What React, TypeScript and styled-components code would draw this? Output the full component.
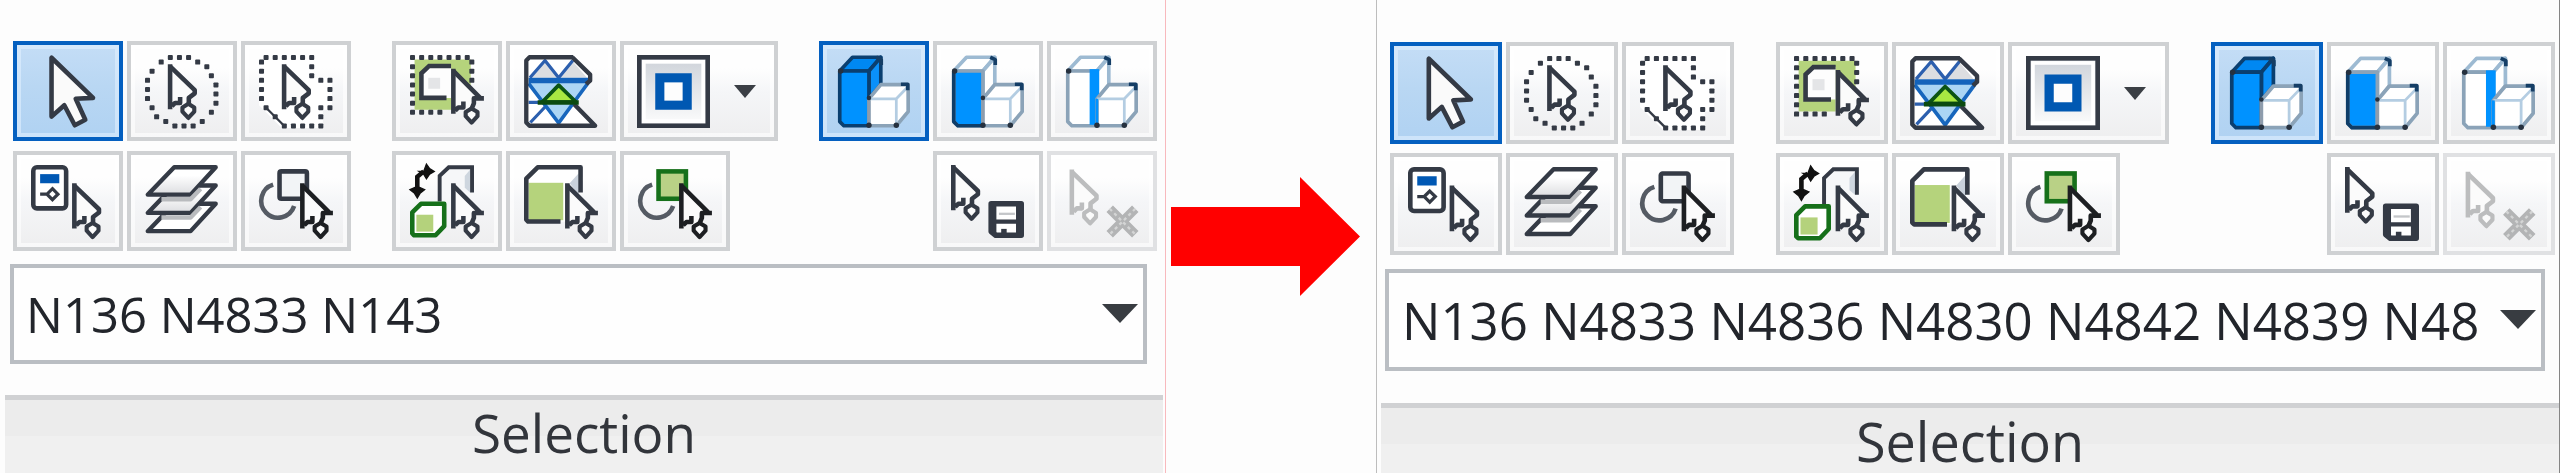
import React, { useId } from 'react';
import styled, { createGlobalStyle, css, ThemeProvider } from 'styled-components';

const GlobalStyle = createGlobalStyle`
  * { box-sizing: border-box; }
  body { margin: 0; background: #fdfdfd; }
`;

const FONT = `'Open Sans', 'Noto Sans', sans-serif`;
const INK = '#343a45';

/* Two magnifications of the same ribbon panel. */
const compact = {
  top: 41, rowGap: 10, bw: 110, bh: 100, wide: 158, icon: 73,
  toolbarPad: '0 8px 0 13px', fieldMargin: '13px 18px 0 10px', fieldH: 100,
  fieldFont: 49, fieldPad: 12, captionGap: 31, captionFont: 53, band: 36,
  captionInset: '0 2px 0 5px', clip: 60,
};
const enlarged = {
  ...compact,
  top: 42, rowGap: 9, bw: 112, bh: 102, wide: 161, icon: 74,
  toolbarPad: '0 4px 0 13px', fieldMargin: '14px 14px 0 8px', fieldH: 102,
  fieldFont: 51, fieldPad: 13, captionGap: 32, captionFont: 54,
  captionInset: '0 0 0 4px', clip: 64,
};

const Page = styled.main`
  display: grid;
  grid-template-columns: 1166fr 210fr 1184fr;
  min-height: 100vh;
  font-family: ${FONT};
`;

const Panel = styled.section<{ $left?: string; $right?: string }>`
  display: flex;
  flex-direction: column;
  min-width: 0;
  padding-top: ${p => p.theme.top}px;
  background: #fdfdfd;
  ${p => p.$left && css`border-left: 1px solid ${p.$left};`}
  ${p => p.$right && css`border-right: 1px solid ${p.$right};`}
`;

const Toolbar = styled.div`
  display: flex;
  justify-content: space-between;
  padding: ${p => p.theme.toolbarPad};
`;

const Group = styled.div`
  display: grid;
  grid-template-columns: repeat(3, auto);
  gap: ${p => p.theme.rowGap}px 4px;
`;

const ToolButton = styled.button<{ $wide?: boolean; $col?: number }>`
  display: flex;
  align-items: center;
  justify-content: center;
  gap: 24px;
  width: ${p => (p.$wide ? p.theme.wide : p.theme.bw)}px;
  height: ${p => p.theme.bh}px;
  padding: 0 ${p => (p.$wide ? 5 : 2)}px 0 0;
  ${p => p.$col && css`grid-column-start: ${p.$col};`}
  border: 4px solid #cfd1d3;
  background: linear-gradient(#fefefe 25%, #f5f6f8 50%, #eeeeef);
  box-shadow: inset 0 0 0 4px rgba(255, 255, 255, 0.6);
  &[aria-pressed='true'] {
    border-color: #0560c0;
    background: linear-gradient(#c4ddf6, #b9d7f3 45%, #b0d2f2);
    box-shadow: inset 0 0 0 4px rgba(225, 240, 255, 0.6);
  }
  &:disabled { border-color: #e0e1e3; }
`;

const Glyph = styled.svg`
  flex: none;
  width: ${p => p.theme.icon}px;
  height: ${p => p.theme.icon}px;
  overflow: visible;
`;

const MenuArrow = styled.svg`
  flex: none;
  width: 22px;
  height: 13px;
`;

const Field = styled.div`
  position: relative;
  margin: ${p => p.theme.fieldMargin};
`;

const FieldSelect = styled.select`
  display: block;
  width: 100%;
  height: ${p => p.theme.fieldH}px;
  padding: 0 ${p => p.theme.clip}px 0 ${p => p.theme.fieldPad}px;
  appearance: none;
  border: 4px solid #babec3;
  border-radius: 0;
  background: #fefefe;
  color: #22252b;
  font: ${p => p.theme.fieldFont}px ${FONT};
  text-overflow: clip;
`;

const FieldArrow = styled.svg`
  position: absolute;
  right: 9px;
  top: 50%;
  width: 36px;
  height: 19px;
  margin-top: -10px;
  pointer-events: none;
`;

const Caption = styled.h2`
  flex: 1;
  margin: ${p => p.theme.captionInset};
  margin-top: ${p => p.theme.captionGap}px;
  padding-top: 3px;
  border-top: 5px solid #d0d1d3;
  background: linear-gradient(#ececec ${p => p.theme.band}px, #f0f0f0 ${p => p.theme.band}px);
  color: #32353b;
  font-size: ${p => p.theme.captionFont}px;
  font-weight: 400;
  line-height: 60px;
  text-align: center;
`;

const Middle = styled.div`
  display: flex;
  align-items: flex-start;
  justify-content: center;
  padding: 177px 16px 0 5px;
`;

const BigArrow = styled.svg`
  width: 100%;
  max-width: 189px;
`;

type Pt = [number, number];

const Dots = ({ at }: { at: Pt[] }) => (
  <g fill={INK}>
    {at.map(([x, y]) => (
      <rect key={`${x}-${y}`} x={x} y={y} width="1.1" height="1.1" rx="0.2" />
    ))}
  </g>
);

const Pointer = ({ x, y, wide, ink = INK }: { x: number; y: number; wide?: boolean; ink?: string }) => (
  <g transform={`translate(${x} ${y})`} fill="none" stroke={ink} strokeWidth="1" strokeLinejoin="round">
    <path
      stroke="none"
      fill="#fbfbfb"
      d={wide
        ? 'M.5.5V9.5L2.5 8.5 3.2 10.6 4.5 12 5.8 10.4 4.9 7.2 6.8 6.5Z'
        : 'M.5.5V9.5L2.5 8.5 3.2 10.6 4.5 12 5.8 10.4 4.7 7.8 6 5.9Z'}
    />
    <path d="M.5 0V9.9M.9 9.2L1.6 8.5H2.7V7.2" />
    {wide
      ? <path d="M.5.5L6.6 6.6M7.2 6.5H5V7.6L4.5 8.8" />
      : <path d="M.5.5L5.9 5.7V6.4L4.6 7.4V8.8" />}
    <path d="M4.5 8.7L3.2 9.5V10.4L4.5 11.8 5.8 10.4V9.5Z" strokeWidth="0.9" />
  </g>
);

const RING: Pt[] = [
  [5, 0], [7, 0], [9, 0], [3, 1], [1, 3], [0, 5], [0, 7], [0, 9], [1, 11], [2, 13], [4, 14], [6, 15],
  [8, 15], [10, 15], [12, 14], [14, 12], [15, 10], [15, 8], [15, 6], [14, 4], [13, 2], [11, 1],
];
const LASSO: Pt[] = [
  [1, 0], [3, 0], [5, 0], [7, 0], [9, 0], [11, 0], [0, 1], [0, 3], [0, 5], [0, 7], [0, 9], [1, 11],
  [3, 13], [5, 15], [7, 15], [9, 15], [11, 15], [13, 15], [11, 2], [11, 4], [13, 5], [15, 5],
  [15, 7], [15, 9], [15, 11], [13, 11], [13, 13],
];
const MARQUEE: Pt[] = [
  [0, 0], [2, 0], [4, 0], [6, 0], [8, 0], [10, 0], [12, 0], [0, 2], [0, 4], [0, 6], [0, 8], [0, 10],
  [0, 12], [2, 12], [4, 12], [6, 12], [13, 1], [13, 3], [13, 5],
];

const Arc = () => (
  <path d="M3.1 4.3A3.7 3.7 0 1 0 7.7 9" fill="none" stroke="#555b64" strokeWidth="1" />
);

const Blocks = ({ mode }: { mode: 'body' | 'face' | 'edge' }) => {
  const body = mode === 'body';
  const edge = body ? '#0a3f70' : '#9dbad2';
  const outer = '#8ba3b8';
  return (
    <g strokeLinejoin="round" strokeWidth="0.8">
      <path d="M.6 3.5L3.4.5H9.6L7 3.5Z" fill={body ? '#0088f2' : '#fff'} stroke={edge} />
      <path d="M7 3.5L9.6.5V6.5L7 9.6Z" fill={body ? '#0a90fa' : '#fff'} stroke={edge} />
      <path d="M.6 3.5H7V15.5H1.5L.6 14.6Z" fill={mode === 'edge' ? '#fff' : '#0092ff'} stroke={body ? edge : outer} />
      {mode === 'face' && <path d="M.6 3.5V14.6L1.5 15.5H7" fill="none" stroke="#0f3d68" />}
      {mode === 'edge' && <rect x="5.4" y="3.1" width="2.1" height="12.2" fill="#0092ff" />}
      <path d="M7 9.6L9.6 6.5H15.6V12.4L13 15.5H7Z" fill="#fff" stroke={outer} />
      <path d="M7 9.6H13V15.5M13 9.6L15.6 6.9" fill="none" stroke="#b4cde2" strokeWidth="0.6" />
      <path d="M7 9.6V15.3" stroke={mode === 'edge' ? '#0092ff' : '#8f9cab'} strokeWidth="0.6" />
      <path d="M14 6.4H15.5V7.7" fill="none" stroke="#153e66" />
      <path d="M8.6.5L9.7 1V2.2" fill="none" stroke="#153e66" />
      <g fill="#26313f">
        <circle cx="7" cy="15.4" r="0.6" />
        <circle cx="13" cy="15.4" r="0.6" />
        <circle cx="0.8" cy="3.5" r="0.6" />
        {mode !== 'edge' && <circle cx="7" cy="9.4" r="0.5" />}
      </g>
    </g>
  );
};

const icons: Record<string, React.ReactNode> = {
  select: (
    <path
      d="M4.5.6V13.5L7.3 11 9.6 15.4 11.9 14.2 9.8 9.6 13.6 9.4Z"
      fill="#fafafa" stroke={INK} strokeWidth="1" strokeLinejoin="round"
    />
  ),
  circle: <><Dots at={RING} /><Pointer x={5} y={2} /></>,
  polygon: (
    <>
      <path d="M1 0H12V5H16V12H14V16H5L0 11V1Z" fill="#fff" />
      <path d="M1.5 11.5L5.5 15.5" stroke={INK} strokeWidth="0.5" />
      <Dots at={LASSO} />
      <Pointer x={5} y={2} />
    </>
  ),
  property: (
    <>
      <rect x="0.5" y="0.5" width="7.2" height="9" rx="0.8" fill="#fff" stroke={INK} />
      <rect x="2" y="2" width="4.2" height="2" fill="#0058b4" />
      <path d="M2 6.4H4M4.7 5.2L5.9 6.4 4.7 7.6 3.5 6.4Z" fill="#fff" stroke={INK} strokeWidth="0.7" />
      <Pointer x={9} y={4} />
    </>
  ),
  layers: (
    <g stroke={INK} strokeLinejoin="round" strokeWidth="0.95">
      <path d="M.6 14.5L6.4 8.5H15.5L10 14.5Z" fill="#fff" />
      <path d="M.6 10.5L6.4 4.5H15.5L10 10.5Z" fill="url(#sheet)" />
      <path d="M.6 6.5L6.4.5H15.5L10 6.5Z" fill="url(#sheet)" />
      <path d="M3.6 7.5H10L12.2 5.2M3.6 11.5H10L12.2 9.2" fill="none" stroke="#b9bbbe" />
    </g>
  ),
  shapes: (
    <>
      <Arc />
      <rect x="4.5" y="1.4" width="6" height="6" rx="0.4" fill="#f2f4f6" stroke={INK} />
      <Pointer x={9} y={4} wide ink="#1d1f22" />
    </>
  ),
  window: (
    <>
      <path d="M1 1H13.3V7L9 3V12H1Z" fill="#b5d37c" />
      <path d="M2.5 9.4V4L4.2 2.4H9V9.4Z" fill="#fdfdfd" />
      <path d="M9 2.4H4.2L2.5 4V9.4H8" fill="none" stroke={INK} />
      <rect x="4" y="5" width="2.6" height="2.4" fill="#e4e5e7" />
      <Dots at={MARQUEE} />
      <Pointer x={9} y={3} wide />
    </>
  ),
  mesh: (
    <g strokeLinejoin="round">
      <path d="M.5.5H10.8L14.6 4.4V5.6L11 10.6 15.4 15.5H.5Z" fill="#fff" />
      <path d="M1.5 5L4.6 1.4 7.6 4.8 10.7 1.4 13.8 5Z" fill="#dcdee1" />
      <path d="M1 6H14L7.6 15Z" fill="#abd5f4" />
      <path d="M1.3 5L4.6 1.2 7.6 5 10.7 1.2M1 10.4H4M1.4 14.8L4.6 11.4" fill="none" stroke="#2c5fae" strokeWidth="0.7" />
      <path d="M1 6.2L7.6 14.9 14 6.2" fill="none" stroke="#1766bd" strokeWidth="0.8" />
      <path d="M1 5.6H14.2" stroke="#1463bb" strokeWidth="1.2" />
      <path d="M10.8.5H1.2L.5 1.2V14.8L1.2 15.5H15.6L11 10.8M10.6.5L14.5 4.3V5.6L13.6 6.4" fill="none" stroke={INK} strokeWidth="0.95" />
      <path d="M7.6 6.6L4 10.3H11.4Z" fill="#a9e842" stroke="#0b5414" strokeWidth="0.8" />
      <path d="M3 10.4H12" stroke="#0b4a10" />
    </g>
  ),
  view: (
    <>
      <rect x="0.5" y="0.5" width="15" height="15" fill="url(#frame)" stroke={INK} />
      <rect x="1.5" y="1.5" width="13" height="13" fill="none" stroke="#fff" strokeWidth="0.8" />
      <rect x="5" y="5" width="6" height="6" fill="#fdfdfd" stroke="#0058b2" strokeWidth="2" />
    </>
  ),
  swap: (
    <>
      <path d="M1.6 5V2.6L3 1.4" fill="none" stroke="#111" />
      <path d="M2 1.4H3L3.6-.2 4.3.8 5.3 1.4 4.3 2 3.6 3 3 2ZM0 5.4L1.1 4.9H2.1L3.2 5.4 2.2 6.2 1.6 7.2 1 6.2Z" fill="#111" stroke="#111" strokeWidth="0.3" />
      <path d="M6.5 8V2.4L8.5.5H13.6V6H9Z" fill="#f6f7f9" />
      <path d="M12 2.4L13.2 1V6L12 5Z" fill="#ced6df" />
      <path d="M6.5 8V2.4L8.5.5H13.6V6" fill="none" stroke={INK} strokeWidth="0.85" />
      <path d="M.5 15V10.4L2.4 8.5H7.5V13.4L5.6 15.4H.9Z" fill="#fff" stroke="#16701a" strokeLinejoin="round" />
      <rect x="1.4" y="10.9" width="3.7" height="3.7" fill="#b4d27c" />
      <Pointer x={9} y={4} wide />
    </>
  ),
  solid: (
    <>
      <path d="M.5 12.4V3L3 .5H12.4V6L9 12.4Z" fill="#fff" />
      <path d="M10 4L12 1.8V6.6Z" fill="#c9d1db" />
      <rect x="1" y="3.9" width="7.6" height="8.2" fill="#b5d37c" />
      <path d="M8 12.4H.9L.5 12V3L3 .5H12.4V6" fill="none" stroke={INK} strokeLinejoin="round" />
      <Pointer x={9} y={4} wide />
    </>
  ),
  greenShapes: (
    <>
      <Arc />
      <rect x="4.5" y="1.4" width="6" height="6" fill="#b9d186" stroke="#16701a" />
      <Pointer x={9} y={4} wide ink="#1d1f22" />
    </>
  ),
  body: <Blocks mode="body" />,
  face: <Blocks mode="face" />,
  edge: <Blocks mode="edge" />,
  save: (
    <>
      <Pointer x={0} y={0} />
      <path d="M8.8 8.5H15.4V15.4H9.8L8.8 14.6Z" fill="#fff" stroke={INK} strokeWidth="1.2" strokeLinejoin="round" />
      <path d="M9.5 9V15M9.4 12.4H15M14.7 9V15" fill="none" stroke={INK} strokeWidth="0.9" />
      <path d="M10.5 10.7H14" stroke="#c4c6c9" strokeWidth="0.5" />
      <rect x="11" y="14" width="1.2" height="1.4" fill={INK} />
    </>
  ),
  remove: (
    <>
      <Pointer x={1} y={1} ink="#bcbdbe" />
      <path d="M9.8 9.6L15.4 15.2M15.4 9.6L9.8 15.2" stroke="#b3b4b5" strokeWidth="2" />
      <path d="M9.8 9.6L15.4 15.2M15.4 9.6L9.8 15.2" stroke="#d4d5d5" strokeWidth="0.5" strokeDasharray="0.7 0.7" />
    </>
  ),
};

interface ToolProps {
  icon: string;
  label: string;
  pressed?: boolean;
  disabled?: boolean;
  menu?: boolean;
  col?: number;
}

const Tool = ({ icon, label, pressed, disabled, menu, col }: ToolProps) => (
  <ToolButton type="button" aria-label={label} aria-pressed={pressed} disabled={disabled} $wide={menu} $col={col}>
    <Glyph viewBox="0 0 16 16" aria-hidden="true">
      <defs>
        <linearGradient id="sheet" x1="0" y1="0" x2="0" y2="1">
          <stop offset="0.3" stopColor="#fff" />
          <stop offset="1" stopColor="#dcdde0" />
        </linearGradient>
        <linearGradient id="frame" x1="0" y1="0" x2="0" y2="1">
          <stop offset="0" stopColor="#cdd2d9" />
          <stop offset="1" stopColor="#fdfdfd" />
        </linearGradient>
      </defs>
      {icons[icon]}
    </Glyph>
    {menu && (
      <MenuArrow viewBox="0 0 22 13" aria-hidden="true">
        <path d="M0 0H22L11 13Z" fill="#3b3f45" />
      </MenuArrow>
    )}
  </ToolButton>
);

interface SelectionPanelProps {
  size: typeof compact;
  nodes: string;
  left?: string;
  right?: string;
}

const SelectionPanel = ({ size, nodes, left, right }: SelectionPanelProps) => {
  const id = useId();
  return (
    <ThemeProvider theme={size}>
      <Panel aria-labelledby={id} $left={left} $right={right}>
        <Toolbar role="toolbar" aria-labelledby={id}>
          <Group>
            <Tool icon="select" label="Select" pressed />
            <Tool icon="circle" label="Circle select" />
            <Tool icon="polygon" label="Polygon select" />
            <Tool icon="property" label="Select by property" />
            <Tool icon="layers" label="Select by layer" />
            <Tool icon="shapes" label="Select by shape" />
          </Group>
          <Group>
            <Tool icon="window" label="Window select" />
            <Tool icon="mesh" label="Mesh select" />
            <Tool icon="view" label="View select" menu />
            <Tool icon="swap" label="Swap selection" />
            <Tool icon="solid" label="Solid select" />
            <Tool icon="greenShapes" label="Connected select" />
          </Group>
          <Group>
            <Tool icon="body" label="Body" pressed />
            <Tool icon="face" label="Face" />
            <Tool icon="edge" label="Edge" />
            <Tool icon="save" label="Save selection" col={2} />
            <Tool icon="remove" label="Remove selection" disabled />
          </Group>
        </Toolbar>
        <Field>
          <FieldSelect aria-label="Selected nodes" defaultValue={nodes}>
            <option value={nodes}>{nodes}</option>
          </FieldSelect>
          <FieldArrow viewBox="0 0 36 19" aria-hidden="true">
            <path d="M0 0H36L18 19Z" fill="#383c41" />
          </FieldArrow>
        </Field>
        <Caption id={id}>Selection</Caption>
      </Panel>
    </ThemeProvider>
  );
};

export default function App() {
  return (
    <>
      <GlobalStyle />
      <Page>
        <SelectionPanel size={compact} nodes="N136 N4833 N143" right="#f8b9bd" />
        <Middle>
          <BigArrow viewBox="0 0 189 119" aria-hidden="true">
            <path d="M0 30H129V0L189 59.5 129 119V89H0Z" fill="#ff0000" />
          </BigArrow>
        </Middle>
        <SelectionPanel
          size={enlarged}
          nodes="N136 N4833 N4836 N4830 N4842 N4839 N484"
          left="#bdbdbd"
          right="#858585"
        />
      </Page>
    </>
  );
}
